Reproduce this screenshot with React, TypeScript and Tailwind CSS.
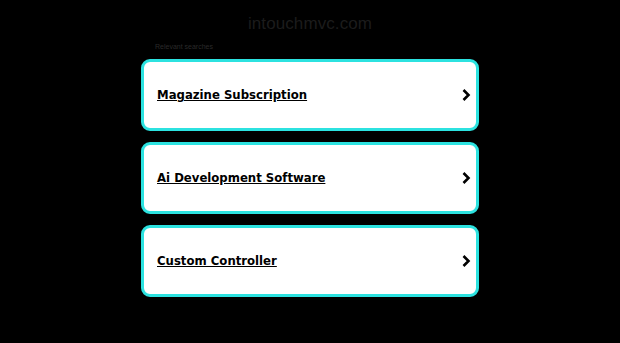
import React from 'react';

const searches = ['Magazine Subscription', 'Ai Development Software', 'Custom Controller'];

function Chevron() {
  return (
    <svg width="10" height="14" viewBox="0 0 10 14" className="shrink-0">
      <path d="M2.5 2 L7.5 7 L2.5 12" fill="none" stroke="#000" strokeWidth="2.6" />
    </svg>
  );
}

export default function App() {
  return (
    <div className="w-[620px] h-[343px] bg-black overflow-hidden">
      <div className="w-[338px] mx-auto">
        <h1 className="pt-[13px] h-[40px] text-center text-[17px] leading-[22px] tracking-[0.1px] text-[#1c1c1c] font-['Liberation_Sans',Arial,sans-serif]">
          intouchmvc.com
        </h1>
        <div className="pl-[14px] h-[19px] text-[7px] leading-[14px] text-[#2a2a2a] font-['Liberation_Sans',Arial,sans-serif]">
          Relevant searches
        </div>
        <div className="flex flex-col gap-[11px]">
          {searches.map((s) =>
          <a
            key={s}
            href="#"
            className="flex items-center justify-between h-[72px] pl-[13px] pr-[5px] bg-white border-[3px] border-[#2ce2e0] rounded-[9px]">

              <span className="text-[13px] font-bold underline text-black font-stretch-condensed font-['DejaVu_Sans_Condensed','DejaVu_Sans',sans-serif]">
                {s}
              </span>
              <Chevron />
            </a>
          )}
        </div>
      </div>
    </div>);

}
